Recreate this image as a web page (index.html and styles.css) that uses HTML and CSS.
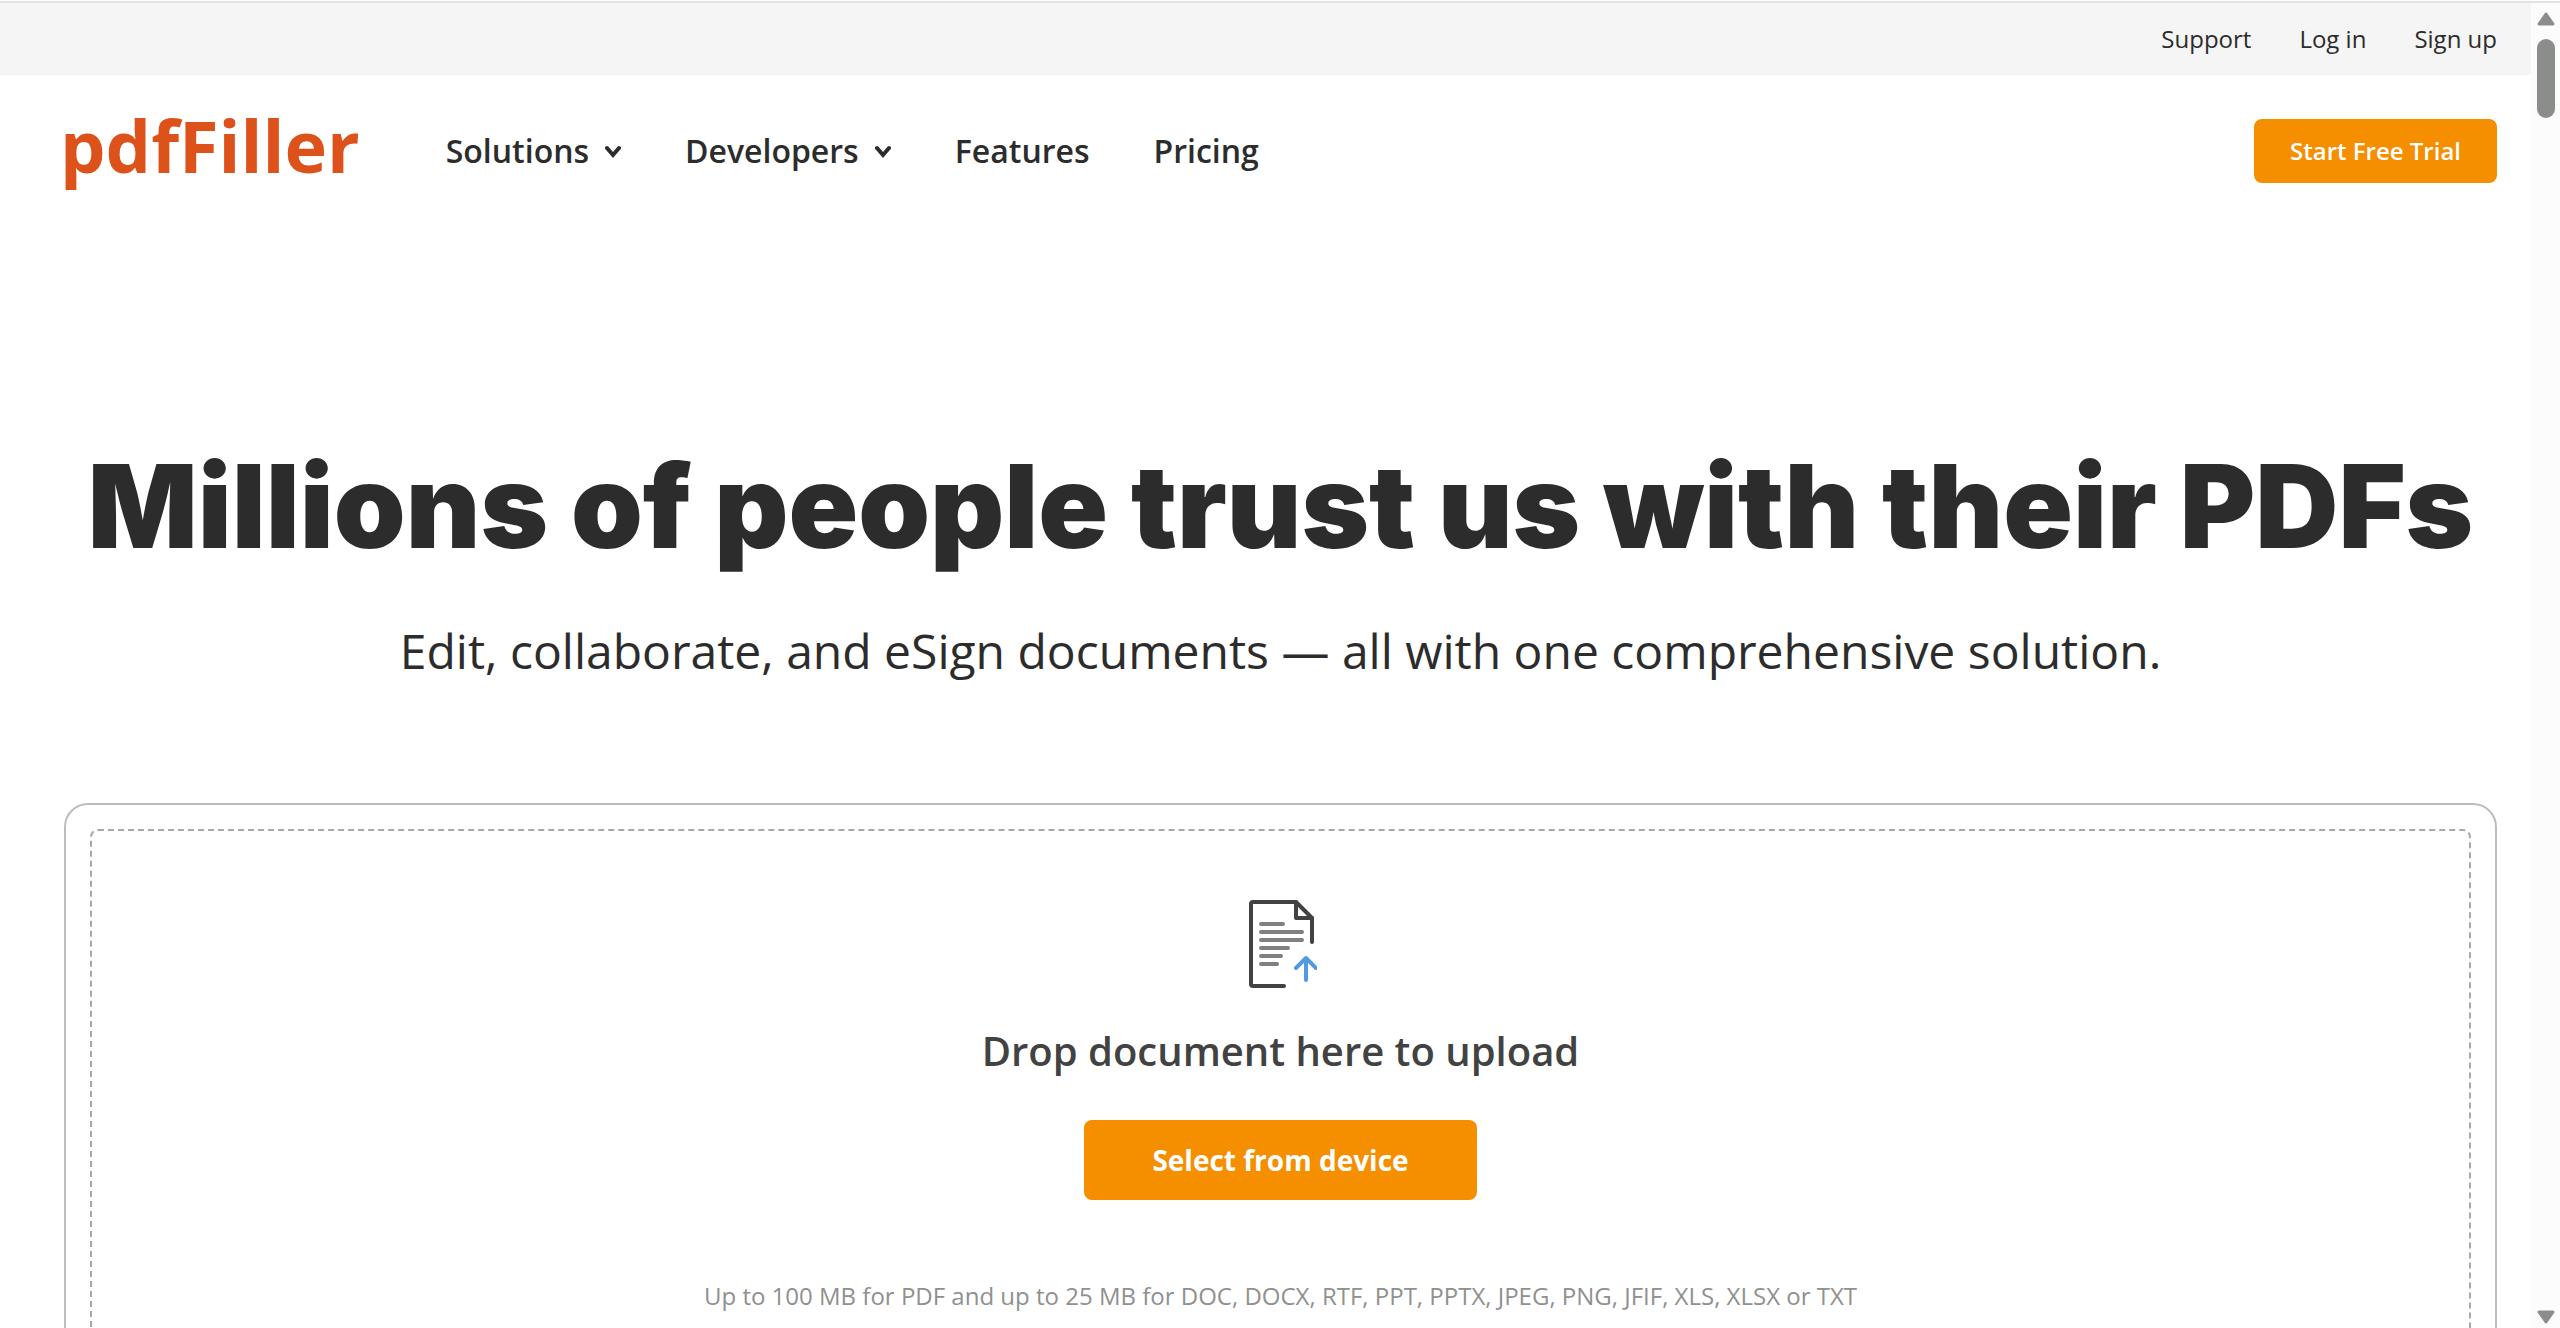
FILE: index.html
```html
<!DOCTYPE html>
<html lang="en">
<head>
  <meta charset="UTF-8">
  <meta name="viewport" content="width=device-width, initial-scale=1.0">
  <title>pdfFiller</title>
  <link rel="stylesheet" href="styles.css">
</head>
<body>
  <div class="top-bar">
    <nav class="top-links">
      <a href="#support">Support</a>
      <a href="#login">Log in</a>
      <a href="#signup">Sign up</a>
    </nav>
  </div>

  <header class="header">
    <a class="logo" href="#home">pdfFiller</a>
    <nav class="main-nav">
      <button class="nav-item" type="button">Solutions
        <svg class="chevron" viewBox="0 0 16 16"><path d="M2 5l6 7 6-7"/></svg>
      </button>
      <button class="nav-item" type="button">Developers
        <svg class="chevron" viewBox="0 0 16 16"><path d="M2 5l6 7 6-7"/></svg>
      </button>
      <a class="nav-item" href="#features">Features</a>
      <a class="nav-item" href="#pricing">Pricing</a>
    </nav>
    <button class="btn btn-trial" type="button">Start Free Trial</button>
  </header>

  <main class="hero">
    <h1>Millions of people trust us with their PDFs</h1>
    <p class="subtitle">Edit, collaborate, and eSign documents — all with one comprehensive solution.</p>

    <section class="uploader">
      <div class="drop-zone">
        <svg class="doc-icon" viewBox="-4 0 72 88">
          <g class="doc-page">
            <path d="M35 86H4a2 2 0 0 1-2-2V4a2 2 0 0 1 2-2h43l16 16v24"/>
            <path d="M47 2v16h16"/>
          </g>
          <path class="doc-lines" d="M12 24h22M12 32h41M12 40h41M12 48h27M12 56h20M12 64h16"/>
          <path class="doc-arrow" d="M57 80V58M47 68l10-10 10 10"/>
        </svg>
        <h2>Drop document here to upload</h2>
        <button class="btn btn-select" type="button">Select from device</button>
        <p class="formats">Up to 100 MB for PDF and up to 25 MB for DOC, DOCX, RTF, PPT, PPTX, JPEG, PNG, JFIF, XLS, XLSX or TXT</p>
      </div>
    </section>
  </main>

  <!-- Scroll track -->
  <div class="scroll-track">
    <svg class="scroll-arrow" viewBox="0 0 18 14"><path d="M9 2l7 10H2z"/></svg>
    <div class="scroll-thumb"></div>
    <svg class="scroll-arrow scroll-down" viewBox="0 0 18 14"><path d="M2 2h14L9 12z"/></svg>
  </div>
</body>
</html>
```
FILE: styles.css
```css
* {
  box-sizing: border-box;
}
html {
  height: 100%;
  overflow: hidden;
}
body {
  margin: 0;
  padding-top: 1px;
  height: 100%;
  overflow: hidden;
  font-family: "Open Sans", sans-serif;
  color: #2c2c2c;
  background-color: #fff;
}
h1, h2, p {
  margin: 0;
}
a {
  color: inherit;
  text-decoration: none;
}
button {
  font-family: inherit;
  border: none;
  cursor: pointer;
}

/* Top bar */
.top-bar {
  padding: 0 63px 0 64px;
  background-color: #f5f5f5;
  border-top: 2px solid #e1e3e1;
}
.top-links {
  display: flex;
  justify-content: flex-end;
  gap: 48px;
  font-size: 24px;
  line-height: 72px;
}

/* Header */
.header {
  display: flex;
  align-items: center;
  height: 152px;
  padding: 0 63px 0 60px;
}
.logo {
  margin-right: 86px;
  padding-bottom: 12px;
  font-size: 72px;
  font-weight: 700;
  line-height: 96px;
  color: #dd511b;
}
.main-nav {
  display: flex;
  gap: 64px;
  margin-right: auto;
}
.nav-item {
  display: flex;
  align-items: center;
  gap: 16px;
  padding: 0;
  font-size: 32px;
  font-weight: 600;
  line-height: 48px;
  color: #2c2c2c;
  background: none;
}
.chevron {
  width: 16px;
  height: 16px;
  fill: none;
  stroke: #2c2c2c;
  stroke-width: 4;
  stroke-linecap: round;
}
.btn {
  color: #fff;
  background-color: #f58f00;
  border-radius: 8px;
}
.btn:hover {
  background-color: #e08300;
}
.btn-trial {
  padding: 0 36px;
  font-size: 24px;
  font-weight: 600;
  line-height: 64px;
}

/* Hero */
.hero {
  padding: 208px 63px 0 64px;
  text-align: center;
}
h1 {
  font-family: Inter, sans-serif;
  font-size: 115px;
  font-weight: 900;
  line-height: 144px;
  white-space: nowrap;
}
.subtitle {
  margin-top: 36px;
  font-size: 48px;
  line-height: 72px;
}
.uploader {
  margin-top: 116px;
  padding: 24px;
  border: 2px solid #bdbdbd;
  border-radius: 24px;
}
.drop-zone {
  display: flex;
  flex-direction: column;
  align-items: center;
  padding: 69px 24px 64px;
  border: 2px dashed #a6a8ab;
  border-radius: 8px;
}
.doc-icon {
  width: 72px;
  height: 88px;
  fill: none;
  stroke-width: 4;
  stroke-linecap: round;
  stroke-linejoin: round;
}
.doc-page { stroke: #424242; }
.doc-lines { stroke: #808080; }
.doc-arrow { stroke: #519ae1; }
h2 {
  margin-top: 36px;
  font-size: 40px;
  font-weight: 600;
  line-height: 54px;
  color: #424242;
}
.btn-select {
  margin-top: 42px;
  padding: 0 68px;
  font-size: 28px;
  font-weight: 700;
  line-height: 80px;
}
.formats {
  margin-top: 78px;
  font-size: 24px;
  line-height: 36px;
  color: #8f918f;
}

/* Scroll track */
.scroll-track {
  position: fixed;
  top: 3px;
  right: 0;
  bottom: 0;
  display: flex;
  flex-direction: column;
  align-items: center;
  width: 29px;
  padding: 9px 0 4px;
  background-color: #fcfcfc;
}
.scroll-arrow {
  width: 18px;
  height: 14px;
  fill: #8b8d8b;
  stroke: #8b8d8b;
  stroke-width: 3;
  stroke-linejoin: round;
}
.scroll-thumb {
  width: 18px;
  height: 79px;
  margin-top: 13px;
  background-color: #8b8d8b;
  border-radius: 9px;
}
.scroll-down {
  margin-top: auto;
}
```
